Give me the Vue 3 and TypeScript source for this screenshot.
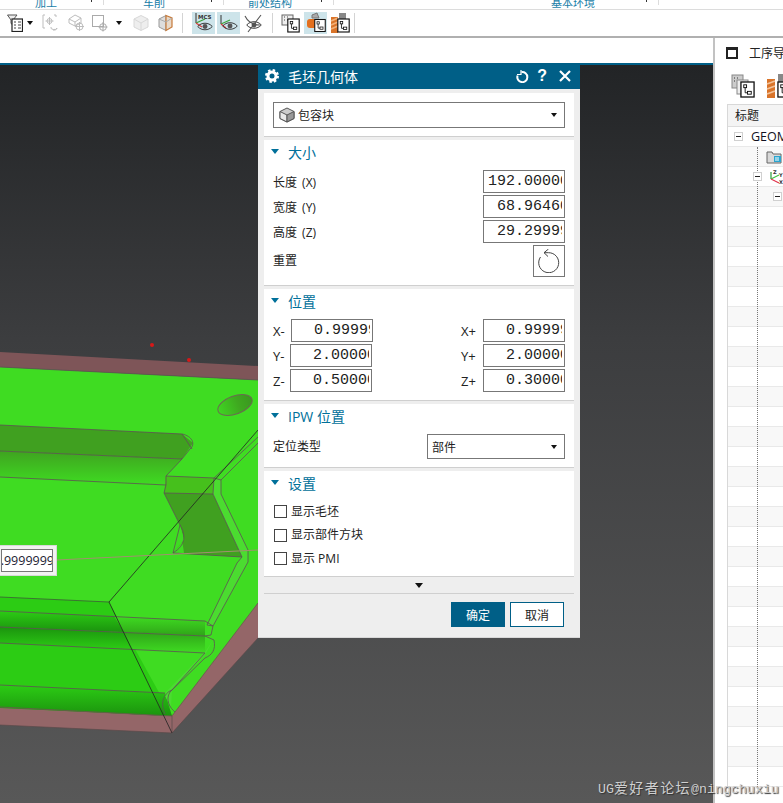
<script setup lang="ts">
interface SizeRow {
  label: string
  value: string
}

interface PosRow {
  minusLabel: string
  minusValue: string
  plusLabel: string
  plusValue: string
}

const tabs = [
  { label: '加工', kind: 'tab-a' },
  { label: '车削', kind: 'tab-b' },
  { label: '前处结构', kind: 'tab-c' },
  { label: '基本环境', kind: 'tab-d' },
]

const sizeRows: SizeRow[] = [
  { label: '长度 (X)', value: '192.00000' },
  { label: '宽度 (Y)', value: '68.96460' },
  { label: '高度 (Z)', value: '29.29999' },
]

const posRows: PosRow[] = [
  { minusLabel: 'X-', minusValue: '0.99999', plusLabel: 'X+', plusValue: '0.99999' },
  { minusLabel: 'Y-', minusValue: '2.00000', plusLabel: 'Y+', plusValue: '2.00000' },
  { minusLabel: 'Z-', minusValue: '0.50000', plusLabel: 'Z+', plusValue: '0.30000' },
]

const checks = ['显示毛坯', '显示部件方块', '显示 PMI']
const treeRows = Array.from({ length: 33 }, (_, i) => i)
</script>

<template>
  <div class="app">
    <svg class="defs" width="0" height="0">
      <symbol id="tree" viewBox="0 0 16 18">
        <rect x="1" y="1" width="14" height="16" fill="#fff" stroke="#111" stroke-width="1.4" />
        <rect x="4" y="4" width="3" height="3" fill="#fff" stroke="#111" />
        <rect x="8" y="11" width="4" height="3" fill="#fff" stroke="#111" />
        <path d="M5.5 7v5.5H8" fill="none" stroke="#111" />
      </symbol>
      <symbol id="eye" viewBox="0 0 22 12">
        <path d="M1 6C6 0 16 0 21 6C16 12 6 12 1 6Z" fill="none" stroke="#333" stroke-width="1.3" />
        <circle cx="11" cy="6" r="3.4" fill="#555" />
      </symbol>
    </svg>

    <div class="ribbon">
      <div v-for="tab in tabs" :key="tab.label" class="rib-tab" :class="tab.kind">
        <span class="rib-label">{{ tab.label }}</span>
        <i class="rib-tick"></i>
      </div>
    </div>

    <div class="toolbar">
      <svg class="ico ml7" width="16" height="18" viewBox="0 0 16 18">
        <path d="M0.5 1H10L6 6V11L4 9.5V6Z" fill="#eee" stroke="#555" />
        <rect x="5" y="5" width="10.5" height="12.5" fill="#fff" stroke="#222" stroke-width="1.2" />
        <path d="M7 8h2M11 8h3M7 11h2M11 11h3M7 14h2M11 14h3" stroke="#444" />
      </svg>
      <i class="caret ml4"></i>
      <svg class="ico ml9" width="16" height="18" viewBox="0 0 16 18" fill="none" stroke="#bdbdbd">
        <path d="M3 1H1V14H3M12 1H14V3" />
        <circle cx="7.5" cy="7" r="2.5" />
        <path d="M7.5 3V11M3.5 7H11.5M9 13a3 2 0 1 0 6 1a3 2 0 0 1-4 2" />
      </svg>
      <svg class="ico ml10" width="16" height="18" viewBox="0 0 16 18" fill="none" stroke="#bdbdbd">
        <path d="M1 5L7 1L13 4V9L7 12L1 9ZM1 5L7 8L13 4M7 8V12" />
        <circle cx="11.5" cy="12.5" r="3.5" />
        <path d="M11.5 8V17M7 12.5H16" />
      </svg>
      <svg class="ico ml8" width="16" height="18" viewBox="0 0 16 18" fill="none" stroke="#aaa">
        <rect x="0.5" y="1.5" width="11" height="11" />
        <circle cx="11" cy="13" r="3.4" />
        <path d="M11 8V17.5M6.5 13H15.5" />
      </svg>
      <i class="caret ml8"></i>
      <svg class="ico ml11" width="16" height="18" viewBox="0 0 16 18">
        <path d="M1 5L8 1.5L15 5V13L8 16.5L1 13Z" fill="#eee" stroke="#d8d8d8" />
        <path d="M1 5L8 9L15 5M8 9V16.5" fill="none" stroke="#d8d8d8" />
      </svg>
      <svg class="ico ml9" width="16" height="18" viewBox="0 0 16 18">
        <path d="M1 5L8 1.5V16.5L1 13Z" fill="#ddd" stroke="#999" />
        <path d="M8 1.5L14 4V13L8 16.5Z" fill="#e8d9c9" stroke="#c67a3a" stroke-width="1.2" />
        <path d="M1 5L8 8L14 4" fill="none" stroke="#aaa" />
      </svg>
      <i class="sep ml8"></i>

      <div class="cell active ml9">
        <svg width="23" height="22" viewBox="0 0 23 22">
          <path d="M4 1V11" stroke="#333" />
          <path d="M4 11L13 7" stroke="#3aa53a" stroke-width="1.2" />
          <path d="M4 11L10 15" stroke="#d83a3a" stroke-width="1.2" />
          <text x="6" y="7" class="mcs">MCS</text>
          <use href="#eye" x="5" y="10" width="16" height="9" />
        </svg>
      </div>
      <div class="cell active ml2">
        <svg width="23" height="22" viewBox="0 0 23 22">
          <path d="M4 3V12" stroke="#333" />
          <path d="M4 12L13 8" stroke="#3aa53a" stroke-width="1.2" />
          <path d="M4 12L9 16" stroke="#d83a3a" stroke-width="1.2" />
          <use href="#eye" x="5" y="9" width="16" height="10" />
        </svg>
      </div>
      <div class="cell ml2">
        <svg width="23" height="22" viewBox="0 0 23 22">
          <use href="#eye" x="4" y="8" width="16" height="10" />
          <path d="M3 4C6 10 12 13 18 13M19 3L6 20" fill="none" stroke="#555" stroke-width="1.1" />
        </svg>
      </div>
      <i class="sep ml7"></i>

      <div class="cell ml6">
        <svg width="23" height="22" viewBox="0 0 23 22">
          <rect x="3" y="3" width="11" height="10" fill="#eee" stroke="#666" />
          <path d="M5 5h1M8 5h1M5 8h1M8 8h1" stroke="#444" />
          <use href="#tree" x="8" y="6" width="13" height="15" />
        </svg>
      </div>
      <div class="cell active ml2">
        <svg width="23" height="22" viewBox="0 0 23 22">
          <path d="M8 3L13 1L15 6H8Z" fill="#aaa" stroke="#777" />
          <rect x="3" y="7" width="10" height="9" rx="3" fill="#e36f1e" />
          <use href="#tree" x="10" y="6" width="12" height="15" />
        </svg>
      </div>
      <div class="cell ml1">
        <svg width="23" height="22" viewBox="0 0 23 22">
          <rect x="3" y="5" width="7" height="16" fill="#d9742a" />
          <path d="M3 9L10 6M3 13L10 10M3 17L10 14" stroke="#f3b27a" stroke-width="1.5" />
          <rect x="11" y="1" width="7" height="6" fill="#888" />
          <use href="#tree" x="9" y="6" width="13" height="15" />
        </svg>
      </div>
      <i class="sep ml3"></i>
    </div>

    <div class="main">
      <div class="work">
        <div class="blank"></div>
        <div class="canvas">
          <svg class="model" width="713" height="738" viewBox="0 65 713 738">
            <defs>
              <linearGradient id="fade" x1="0" y1="0" x2="0" y2="1">
                <stop offset="0" stop-color="#3fa320" />
                <stop offset="1" stop-color="#3fdc22" />
              </linearGradient>
              <linearGradient id="downA" x1="0" y1="0" x2="0" y2="1">
                <stop offset="0" stop-color="#2ccc14" />
                <stop offset="1" stop-color="#1b930e" />
              </linearGradient>
              <linearGradient id="upA" x1="0" y1="0" x2="0" y2="1">
                <stop offset="0" stop-color="#1b930e" />
                <stop offset="1" stop-color="#2ccc14" />
              </linearGradient>
              <linearGradient id="downB" x1="0" y1="0" x2="0" y2="1">
                <stop offset="0" stop-color="#3fdc22" />
                <stop offset="1" stop-color="#2fa418" />
              </linearGradient>
              <linearGradient id="upB" x1="0" y1="0" x2="0" y2="1">
                <stop offset="0" stop-color="#2fa418" />
                <stop offset="1" stop-color="#3fdc22" />
              </linearGradient>
              <linearGradient id="hole" x1="0" y1="0" x2="1" y2="0">
                <stop offset="0" stop-color="#3fd622" />
                <stop offset="0.6" stop-color="#3fa820" />
                <stop offset="1" stop-color="#3a9820" />
              </linearGradient>
            </defs>

            <polygon points="0,352 258,366 258,380 0,367" fill="#7e5558" />
            <polygon points="0,707 165,716 258,603 258,638 172,733 0,725" fill="#946668" />
            <polygon points="0,367 258,380 258,603 172,716 0,707" fill="#3fdc22" />
            <polygon points="0,597 109,602 172,716 0,707" fill="#2ccc14" />

            <polygon points="0,425 182,434 193,443 182,459 0,451" fill="#40a020" />
            <polygon points="0,451 182,459 166,476 166,485 0,477" fill="url(#fade)" />
            <polygon points="166,476 214,478 213,494 164,493" fill="#46c01c" />
            <polygon points="164,493 213,494 242,557 173,553 184,540 180,525" fill="#40a020" />
            <polygon points="180,525 184,540 173,553 184,553" fill="#3fdc22" />

            <polygon points="0,611 114,616 124,632 0,627" fill="url(#downA)" />
            <polygon points="0,627 124,632 133,649 0,643" fill="url(#upA)" />
            <polygon points="114,616 205,621 205,636 124,632" fill="url(#downB)" />
            <polygon points="124,632 205,636 205,653 133,649" fill="url(#upB)" />
            <polygon points="0,685 165,693 172,716 0,708" fill="url(#downA)" />

            <polygon points="214,478 221,480 221,494 248,550 248,562 213,626 207,625 237,563 242,557 213,494" fill="#4bdc30" />
            <polygon points="213,640 205,655 172,690 171,707 165,696 166,692 205,652" fill="#4bdc30" />
            <ellipse cx="235" cy="405" rx="18" ry="9" transform="rotate(-20 235 405)" fill="url(#hole)" stroke="#6b6a52" />

            <g fill="none" stroke="#5f4f56" stroke-width="0.8">
              <path d="M0 367L258 380" />
              <path d="M0 425L182 434C192 436 196 444 190 449L182 459L166 476V485L0 477" />
              <path d="M182 434L192 449M0 451L182 459" />
              <path d="M166 476L214 478L213 494L164 493L166 485" />
              <path d="M164 493L180 525C186 535 186 545 173 553L242 557L213 494" />
              <path d="M180 525L173 553" />
              <path d="M214 478L221 480V494L248 550V562L213 626L207 625L237 563L242 557" />
              <path d="M214 478L258 437M221 480L258 443" />
              <path d="M0 611L205 621L213 626L211 635L205 636L0 627" />
              <path d="M205 636L214 640C216 650 212 655 205 658L170 692C165 700 170 708 175 712" />
              <path d="M0 643L205 653L172 690C163 693 160 705 165 714" />
              <path d="M0 685L165 693" />
              <path d="M0 597L109 602" stroke="#3d5a38" />
            </g>
            <path d="M0 707L172 716L258 603" fill="none" stroke="#6e5550" stroke-width="0.8" />
            <path d="M0 725L172 733L258 638M172 716V733" fill="none" stroke="#5a4a4a" stroke-width="0.7" />
            <path d="M258 430L109 602L172 733" fill="none" stroke="#222" stroke-width="0.8" />
            <path d="M57 560L258 550" stroke="#a29070" stroke-width="1" />
            <circle cx="152" cy="345" r="2" fill="#d81818" />
            <circle cx="189" cy="360" r="2" fill="#d81818" />
          </svg>

          <div class="callout"><div class="callout-field"><span>1.9999999</span></div></div>
        </div>
      </div>

      <aside class="panel">
        <div class="panel-head">
          <i class="win"></i>
          <span class="panel-title">工序导航器</span>
        </div>
        <div class="panel-icons">
          <svg width="25" height="24" viewBox="0 0 25 24">
            <rect x="1" y="1" width="11" height="13" fill="#ccc" stroke="#888" />
            <path d="M3 4h1M6 4h1M3 7h1M6 7h1" stroke="#333" />
            <rect x="6" y="6" width="11" height="14" fill="#eee" stroke="#888" />
            <use href="#tree" x="9" y="7" width="15" height="17" />
          </svg>
          <svg width="20" height="24" viewBox="0 0 20 24">
            <rect x="1" y="5" width="8" height="19" fill="#d9742a" />
            <path d="M1 10L9 7M1 15L9 12M1 20L9 17" stroke="#f3c39a" stroke-width="1.6" />
            <rect x="12" y="0" width="8" height="8" fill="#888" />
            <use href="#tree" x="11" y="7" width="15" height="17" />
          </svg>
        </div>
        <div class="table">
          <div class="table-head">标题</div>
          <div v-for="row in treeRows" :key="row" class="tree-row" :class="{ odd: row % 2 === 1 }">
            <template v-if="row === 0">
              <i class="minus"></i>
              <span class="geom">GEOMETRY</span>
            </template>
            <template v-else-if="row === 1">
              <svg class="folder" width="16" height="14" viewBox="0 0 16 14">
                <path d="M1 2H6L7 4H15V13H1Z" fill="#d8d8d8" stroke="#666" />
                <rect x="8" y="6" width="7" height="6" fill="#2aa5cf" />
                <path d="M9 8h4M9 10h4" stroke="#fff" />
              </svg>
            </template>
            <template v-else-if="row === 2">
              <i class="minus minus-mid"></i>
              <svg class="axes" width="16" height="16" viewBox="0 0 16 16" fill="none">
                <path d="M2 10V3" stroke="#2a9a3a" stroke-width="1.2" />
                <path d="M2 10L10 6" stroke="#3ec23e" stroke-width="1.2" />
                <path d="M2 10L10 14" stroke="#e0304a" stroke-width="1.2" />
                <text x="4" y="5" class="axis-letter">Z</text>
                <text x="10" y="8" class="axis-letter">Y</text>
                <text x="10" y="15" class="axis-letter">X</text>
              </svg>
            </template>
            <template v-else-if="row === 3">
              <i class="minus minus-deep"></i>
            </template>
          </div>
          <i class="dots"></i>
        </div>
      </aside>

      <section class="dialog">
        <header class="dlg-head">
          <svg class="gear" width="14" height="14" viewBox="0 0 14 14">
            <circle cx="7" cy="7" r="4" fill="none" stroke="#fff" stroke-width="3" />
            <circle cx="7" cy="7" r="5.8" fill="none" stroke="#fff" stroke-width="2.4" stroke-dasharray="2.4 2.15" />
          </svg>
          <span class="dlg-title">毛坯几何体</span>
          <svg class="head-ico" width="13" height="13" viewBox="0 0 13 13" fill="none" stroke="#fff" stroke-width="2">
            <path d="M5.5 2.2A5 5 0 1 1 1.6 5.5" />
            <path d="M5 0V4.5H1" stroke-width="1.2" />
          </svg>
          <span class="help">?</span>
          <svg class="head-x" width="12" height="12" viewBox="0 0 12 12" stroke="#fff" stroke-width="2.2">
            <path d="M1 1L11 11M11 1L1 11" />
          </svg>
        </header>

        <div class="sect sect-type">
          <div class="select">
            <svg class="cube" width="16" height="16" viewBox="0 0 16 16">
              <path d="M8 1L15 4.5V11.5L8 15L1 11.5V4.5Z" fill="#ccc" stroke="#555" />
              <path d="M1 4.5L8 8V15L1 11.5Z" fill="#e8e8e8" stroke="#555" />
              <path d="M15 4.5L8 8V15L15 11.5Z" fill="#999" stroke="#555" />
            </svg>
            <span class="select-text">包容块</span>
            <i class="caret"></i>
          </div>
        </div>

        <div class="sect sect-size">
          <h3 class="sect-title"><i class="arrow"></i>大小</h3>
          <div v-for="row in sizeRows" :key="row.label" class="size-row">
            <span class="lbl lbl-size">{{ row.label }}</span>
            <div class="field"><div class="clip"><span class="num">{{ row.value }}</span></div></div>
          </div>
          <div class="reset-row">
            <span class="lbl">重置</span>
            <button type="button" class="reset">
              <svg width="24" height="24" viewBox="0 0 24 24" fill="none" stroke="#444" stroke-width="1">
                <path d="M7 3.7H11.5A10 10 0 1 1 3.5 8" />
                <path d="M11.5 0L7 3.7L11 7.5" />
              </svg>
            </button>
          </div>
        </div>

        <div class="sect sect-pos">
          <h3 class="sect-title"><i class="arrow"></i>位置</h3>
          <div v-for="(row, i) in posRows" :key="row.minusLabel" class="pos-row">
            <span class="lbl axis">{{ row.minusLabel }}</span>
            <div class="field" :class="{ nudge: i === 0 }"><div class="clip"><span class="num">{{ row.minusValue }}</span></div></div>
            <span class="lbl axis axis-plus">{{ row.plusLabel }}</span>
            <div class="field"><div class="clip"><span class="num">{{ row.plusValue }}</span></div></div>
          </div>
        </div>

        <div class="sect sect-ipw">
          <h3 class="sect-title"><i class="arrow"></i>IPW 位置</h3>
          <div class="ipw-row">
            <span class="lbl">定位类型</span>
            <div class="select select-small">
              <span class="select-text">部件</span>
              <i class="caret"></i>
            </div>
          </div>
        </div>

        <div class="sect sect-set">
          <h3 class="sect-title"><i class="arrow"></i>设置</h3>
          <label v-for="item in checks" :key="item" class="check">
            <i class="box"></i>
            <span class="lbl">{{ item }}</span>
          </label>
        </div>

        <div class="more"><i class="caret caret-big"></i></div>

        <footer class="dlg-foot">
          <button type="button" class="btn primary">确定</button>
          <button type="button" class="btn">取消</button>
        </footer>
      </section>

      <div class="mark">UG<span class="mark-cjk">爱好者论坛</span>@ningchuxiu</div>
    </div>
  </div>
</template>

<style>
html,
body {
  margin: 0;
  background: #fff;
}
</style>

<style scoped>
.app {
  color: #222;
  display: flex;
  flex-direction: column;
  font-family: "Open Sans", "Noto Sans CJK SC", sans-serif;
  height: 803px;
  overflow: hidden;
  width: 783px;
}

.defs {
  height: 0;
  position: absolute;
}

.ribbon {
  border-bottom: 1px solid #dcdcdc;
  display: flex;
  flex: none;
  height: 9px;
  overflow: hidden;
}

.rib-tab {
  border-right: 1px solid #dcdcdc;
  box-sizing: border-box;
  height: 5px;
  position: relative;
}

.tab-a { width: 104px; }
.tab-b { width: 120px; }
.tab-c { width: 110px; }
.tab-d { margin-left: 171px; width: 154px; }

.rib-label {
  bottom: -5px;
  color: #1a7ea8;
  font-size: 11px;
  line-height: 14px;
  position: absolute;
  white-space: nowrap;
}

.tab-a .rib-label { right: 46px; }
.tab-b .rib-label { right: 58px; }
.tab-c .rib-label { right: 41px; }
.tab-d .rib-label { right: 63px; }

.rib-tick {
  background: #333;
  height: 2px;
  position: absolute;
  right: 11px;
  top: 0;
  width: 1px;
}

.toolbar {
  align-items: center;
  border-bottom: 2px solid #b0b0b0;
  box-sizing: border-box;
  display: flex;
  flex: none;
  height: 28px;
}

.ico { flex: none; }
.ml1 { margin-left: 1px; }
.ml2 { margin-left: 2px; }
.ml3 { margin-left: 3px; }
.ml4 { margin-left: 4px; }
.ml6 { margin-left: 6px; }
.ml7 { margin-left: 7px; }
.ml8 { margin-left: 8px; }
.ml9 { margin-left: 9px; }
.ml10 { margin-left: 10px; }
.ml11 { margin-left: 11px; }

.caret {
  border-left: 3.5px solid transparent;
  border-right: 3.5px solid transparent;
  border-top: 4px solid #111;
  flex: none;
  height: 0;
  width: 0;
}

.caret-big {
  border-left-width: 4.5px;
  border-right-width: 4.5px;
  border-top-width: 5px;
}

.sep {
  background: #d4d4d4;
  flex: none;
  height: 20px;
  width: 1px;
}

.cell {
  flex: none;
  height: 22px;
  width: 23px;
}

.cell svg { display: block; }
.cell.active { background: #cde4ea; }

.mcs {
  fill: #333;
  font-family: "DejaVu Sans", sans-serif;
  font-size: 5.5px;
  font-weight: 700;
}

.main {
  display: flex;
  flex: 1;
  min-height: 0;
  position: relative;
}

.work {
  display: flex;
  flex: none;
  flex-direction: column;
  width: 713px;
}

.blank {
  border-bottom: 2px solid #005f87;
  flex: none;
  height: 25px;
}

.canvas {
  background: linear-gradient(#222426, #3c3d3f 37%, #585858);
  flex: 1;
  position: relative;
}

.model {
  display: block;
  left: 0;
  position: absolute;
  top: 0;
}

.callout {
  background: #f2f2f2;
  border: 1px solid #d8d8d8;
  box-sizing: border-box;
  height: 31px;
  left: -3px;
  padding: 3px;
  position: absolute;
  top: 480px;
  width: 60px;
}

.callout-field {
  background: #fff;
  border: 1px solid #777;
  box-sizing: border-box;
  color: #223;
  display: flex;
  font-size: 12.5px;
  height: 23px;
  justify-content: flex-end;
  line-height: 21px;
  overflow: hidden;
}

.callout-field span { margin-right: -2px; }

.panel {
  background: #fff;
  border-left: 2px solid #c2c2c2;
  box-sizing: border-box;
  flex: 1;
  min-width: 0;
  overflow: hidden;
  position: relative;
}

.panel-head {
  align-items: center;
  display: flex;
  height: 30px;
  padding-left: 11px;
  white-space: nowrap;
}

.win {
  border: 2px solid #222;
  border-top-width: 3px;
  box-sizing: border-box;
  flex: none;
  height: 12px;
  width: 12px;
}

.panel-title {
  font-size: 12px;
  margin-left: 11px;
}

.panel-icons {
  box-sizing: border-box;
  display: flex;
  gap: 10px;
  height: 36px;
  padding: 6px 0 0 16px;
  white-space: nowrap;
}

.panel-icons svg { flex: none; }

.table {
  border-left: 1px solid #d8d8d8;
  border-top: 1px solid #d8d8d8;
  margin-left: 12px;
  position: relative;
  width: 200px;
}

.table-head {
  background: #f4f4f4;
  border-bottom: 1px solid #ddd;
  box-sizing: border-box;
  font-size: 12px;
  height: 22px;
  line-height: 21px;
  padding-left: 7px;
}

.tree-row {
  align-items: center;
  border-bottom: 1px solid #e9e9e9;
  box-sizing: border-box;
  display: flex;
  height: 20px;
}

.tree-row.odd { background: #f8f8f8; }

.minus {
  background: #fff;
  border: 1px solid #d0d0d0;
  box-sizing: border-box;
  flex: none;
  height: 9px;
  margin-left: 6px;
  position: relative;
  width: 9px;
  z-index: 1;
}

.minus::after {
  background: #222;
  content: "";
  height: 1px;
  left: 1px;
  position: absolute;
  top: 3px;
  width: 5px;
}

.minus-mid { margin-left: 25px; }
.minus-deep { margin-left: 45px; }

.geom {
  color: #112;
  font-size: 12.5px;
  margin-left: 8px;
  white-space: nowrap;
}

.folder { margin-left: 38px; }
.axes { margin-left: 7px; }

.axis-letter {
  fill: #333;
  font-family: "DejaVu Sans", sans-serif;
  font-size: 5px;
  font-weight: 700;
}

.dots {
  border-left: 1px dotted #777;
  bottom: 0;
  left: 29px;
  position: absolute;
  top: 42px;
}

.dialog {
  background: #eee;
  border-bottom: 1px solid #d8d8d8;
  box-sizing: border-box;
  display: flex;
  flex-direction: column;
  height: 575px;
  left: 258px;
  position: absolute;
  top: 25px;
  width: 322px;
}

.dlg-head {
  align-items: center;
  background: #005f87;
  color: #fff;
  display: flex;
  flex: none;
  height: 26px;
  padding-left: 7px;
}

.dlg-title {
  flex: 1;
  font-size: 14px;
  margin-left: 9px;
}

.head-ico { margin-right: 8px; }

.help {
  font-family: "Liberation Sans", sans-serif;
  font-size: 16px;
  font-weight: 700;
  margin-right: 12px;
}

.head-x { margin-right: 9px; }

.sect {
  background: #fff;
  border-bottom: 1px solid #cfcfcf;
  box-sizing: border-box;
  flex: none;
  margin: 0 6px;
  padding: 0 9px;
}

.sect-type {
  height: 44px;
  margin-top: 4px;
  padding-top: 9px;
}

.sect-size {
  height: 146px;
  margin-top: 3px;
}

.sect-pos {
  height: 112px;
  margin-top: 3px;
}

.sect-ipw {
  height: 64px;
  margin-top: 3px;
}

.sect-set {
  height: 106px;
  margin-top: 3px;
}

.sect-set .sect-title { margin-bottom: 3px; }

.sect-title {
  align-items: center;
  box-sizing: border-box;
  color: #00709a;
  display: flex;
  font-size: 14px;
  font-weight: 400;
  height: 26px;
  margin: 0 0 4px -2px;
  padding-bottom: 3px;
}

.arrow {
  border-left: 4.5px solid transparent;
  border-right: 4.5px solid transparent;
  border-top: 5px solid #00709a;
  height: 0;
  margin-right: 9px;
  width: 0;
}

.lbl {
  font-size: 12px;
  margin-top: -2px;
  white-space: nowrap;
}

.lbl-size { word-spacing: 2px; }

.select {
  align-items: center;
  background: #fff;
  border: 1px solid #777;
  box-sizing: border-box;
  display: flex;
  height: 26px;
  padding: 0 7px 0 5px;
}

.select-text {
  flex: 1;
  font-size: 12px;
  margin-left: 3px;
}

.cube { flex: none; }

.select-small {
  height: 25px;
  margin-left: auto;
  padding-left: 1px;
  width: 138px;
}

.field {
  align-self: flex-start;
  background: #fff;
  border: 1px solid #777;
  box-sizing: border-box;
  flex: none;
  height: 23px;
  padding-right: 2px;
  width: 82px;
}

.clip {
  display: flex;
  height: 100%;
  justify-content: flex-end;
  overflow: hidden;
}

.num {
  font-family: "Liberation Mono", monospace;
  font-size: 15px;
  line-height: 21px;
  margin-right: -7px;
  white-space: nowrap;
}

.size-row {
  align-items: center;
  display: flex;
  height: 25px;
  justify-content: space-between;
}

.reset-row {
  align-items: center;
  display: flex;
  justify-content: space-between;
}

.reset {
  align-items: center;
  background: #fff;
  border: 1px solid #777;
  box-sizing: border-box;
  display: flex;
  height: 32px;
  justify-content: center;
  padding: 0;
  width: 32px;
}

.pos-row {
  align-items: center;
  display: flex;
  height: 25px;
}

.axis {
  flex: none;
  font-size: 13px;
  width: 17px;
}

.axis-plus {
  margin-left: 89px;
  margin-right: 5px;
}

.nudge {
  margin-left: 1px;
  margin-right: -1px;
}

.ipw-row {
  align-items: center;
  display: flex;
}

.check {
  align-items: center;
  display: flex;
  height: 23.5px;
}

.box {
  border: 1px solid #444;
  box-sizing: border-box;
  flex: none;
  height: 13px;
  margin: 0 4px 0 1px;
  width: 13px;
}

.more {
  align-items: center;
  border-bottom: 1px solid #cfcfcf;
  box-sizing: border-box;
  display: flex;
  flex: none;
  height: 17px;
  justify-content: center;
  margin: 0 6px;
}

.dlg-foot {
  display: flex;
  gap: 5px;
  justify-content: flex-end;
  padding: 8px 16px 0 0;
}

.btn {
  background: #fff;
  border: 1px solid #005f87;
  box-sizing: border-box;
  color: #222;
  font-family: inherit;
  font-size: 12px;
  height: 25px;
  padding: 0;
  width: 54px;
}

.btn.primary {
  background: #005f87;
  color: #fff;
}

.mark {
  bottom: 4px;
  color: #cfcfcf;
  font-family: "Liberation Mono", monospace;
  font-size: 13.3px;
  left: 598px;
  line-height: 18px;
  position: absolute;
  text-shadow: 1px 1px 1px #333;
  white-space: nowrap;
}

.mark-cjk {
  font-family: "Noto Sans CJK SC", sans-serif;
  font-size: 14px;
  letter-spacing: 1.4px;
}
</style>
